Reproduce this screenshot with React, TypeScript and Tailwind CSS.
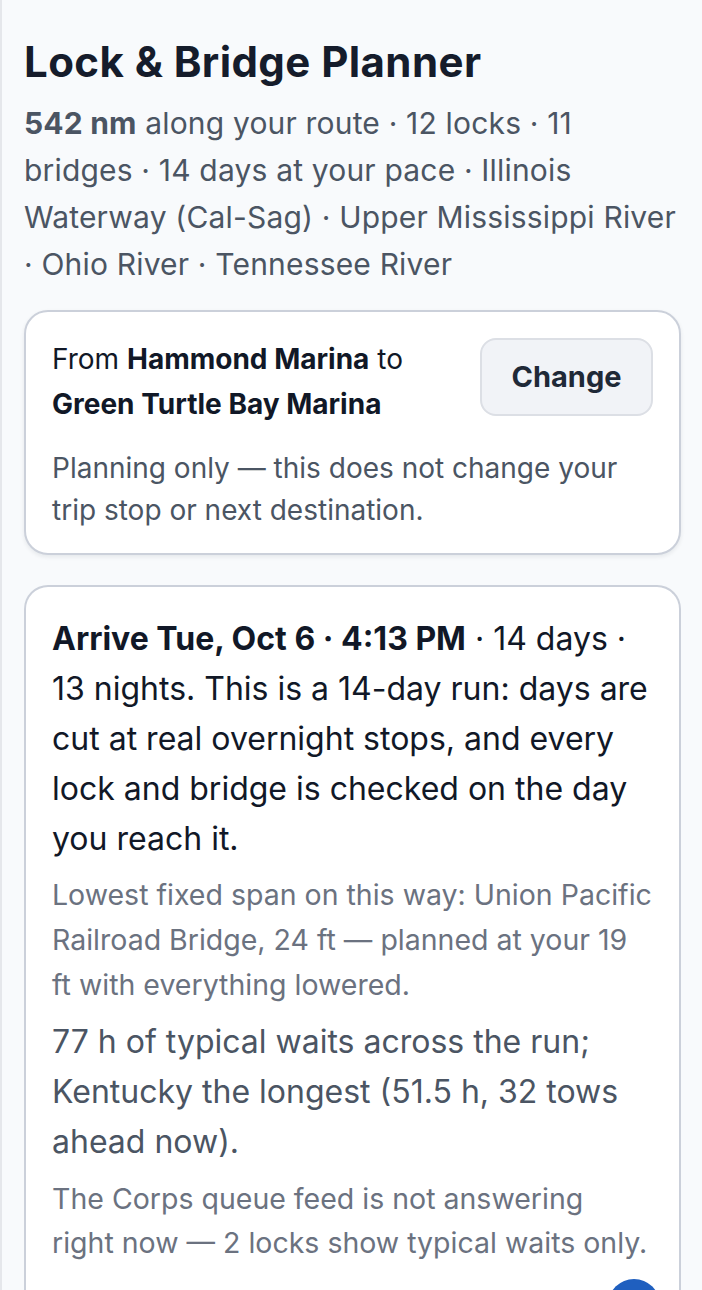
export default function App() {
  return (
    <div
      className="min-h-[1290px] border-l-2 border-gray-200 bg-[#f8fafc] pl-[22px] pr-[21px] pt-[36px] text-[#111827]"
      style={{ fontFamily: 'Inter, "Noto Sans", sans-serif' }}
    >
      <h1 className="text-[42px] font-bold leading-[52px] tracking-[0.01em] text-[#151c2b]">
        Lock &amp; Bridge Planner
      </h1>

      <p className="-mr-[3px] mt-[12px] text-[30px] leading-[47px] tracking-[0.006em] text-[#4b5563]">
        <span className="font-bold">542 nm</span> along your route · 12 locks · 11 bridges · 14 days at your pace ·
        Illinois Waterway (Cal-Sag) · Upper Mississippi River · Ohio River · Tennessee River
      </p>

      {/* route card */}
      <div className="mt-[22px] rounded-[24px] border-2 border-[#cbd0da] bg-white px-[26px] pb-[22px] pt-[25px] shadow-[0_2px_4px_rgba(15,23,42,0.08)]">
        <div className="flex items-start justify-between gap-4">
          <p className="text-[28px] leading-[45px] text-[#111827]">
            From <span className="font-bold">Hammond Marina</span> to{' '}
            <span className="font-bold">Green Turtle Bay Marina</span>
          </p>
          <button className="mt-[1px] h-[78px] w-[173px] shrink-0 rounded-[16px] border-2 border-[#dcdfe5] bg-[#f1f3f7] text-[29px] font-bold text-[#1f2937]">
            Change
          </button>
        </div>
        <p className="mt-[20px] text-[28px] leading-[42px] text-[#4b5563]">
          Planning only — this does not change your trip stop or next destination.
        </p>
      </div>

      {/* summary card */}
      <div className="mt-[30px] rounded-t-[24px] border-2 border-b-0 border-[#cbd0da] bg-white px-[26px] pt-[27px] pb-[20px]">
        <p className="text-[32px] leading-[50px] text-[#111827]">
          <span className="font-bold">Arrive Tue, Oct 6 · 4:13 PM</span> · 14 days · 13 nights. This is a 14-day run:
          days are cut at real overnight stops, and every lock and bridge is checked on the day you reach it.
        </p>
        <p className="mt-[8px] text-[28.5px] leading-[45px] text-[#6b7280]">
          Lowest fixed span on this way: Union Pacific Railroad Bridge, 24 ft — planned at your 19 ft with everything
          lowered.
        </p>
        <p className="mt-[10px] text-[32px] leading-[50px] text-[#4b5563]">
          77 h of typical waits across the run; Kentucky the longest (51.5 h, 32 tows ahead now).
        </p>
        <p className="mt-[10px] pr-[3px] text-[28.5px] leading-[44px] text-[#6b7280]">
          The Corps queue feed is not answering right now — 2 locks show typical waits only.
        </p>
        <div className="-mr-[7px] mt-[14px] flex justify-end">
          <div className="h-[52px] w-[52px] rounded-full bg-[#1f5fbf]" />
        </div>
      </div>
    </div>
  );
}
